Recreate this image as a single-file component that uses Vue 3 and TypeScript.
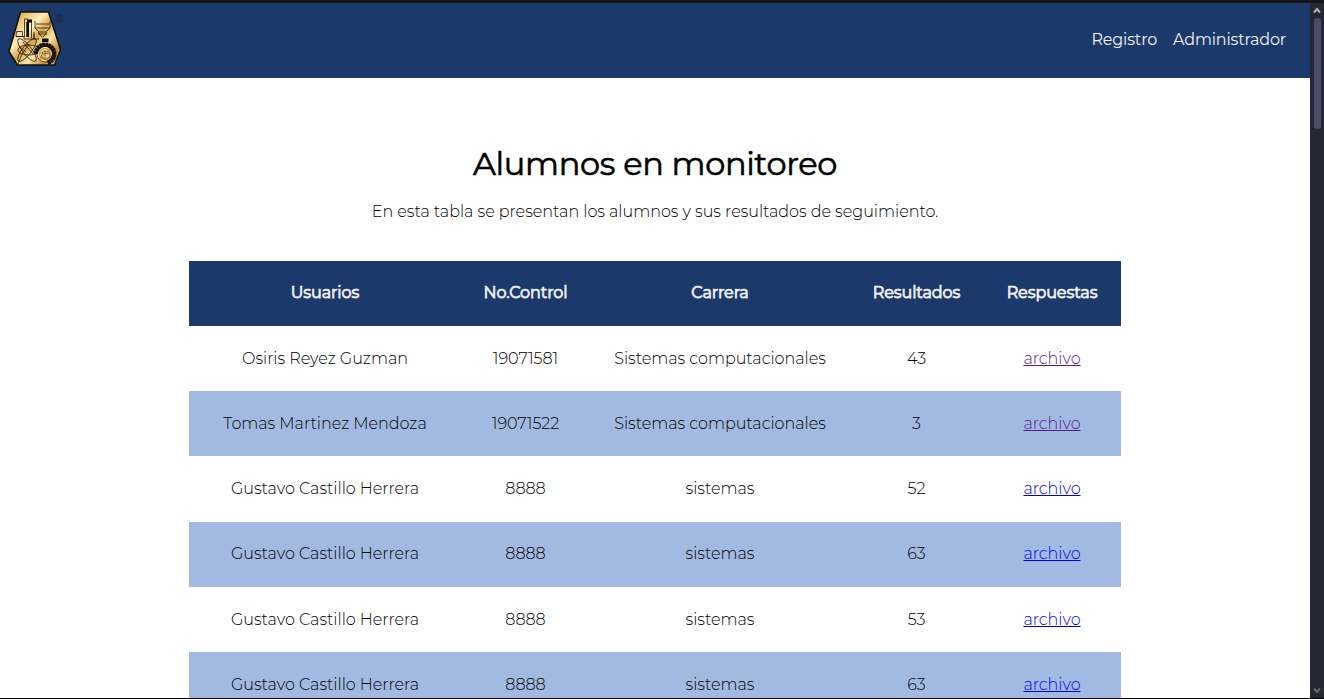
<script setup lang="ts">
interface Alumno {
  usuario: string
  control: string
  carrera: string
  resultado: number
  visitado: boolean
}

const gustavo = (resultado: number): Alumno => ({
  usuario: 'Gustavo Castillo Herrera',
  control: '8888',
  carrera: 'sistemas',
  resultado,
  visitado: false,
})

const alumnos: Alumno[] = [
  { usuario: 'Osiris Reyez Guzman', control: '19071581', carrera: 'Sistemas computacionales', resultado: 43, visitado: true },
  { usuario: 'Tomas Martinez Mendoza', control: '19071522', carrera: 'Sistemas computacionales', resultado: 3, visitado: true },
  gustavo(52),
  gustavo(63),
  gustavo(53),
  gustavo(63),
]

const teeth: number[] = Array.from({ length: 14 }, (_, i) => i * 18 - 80)
</script>

<template>
  <div class="window">
    <div class="viewport">
      <main class="page">
        <nav class="navbar">
          <svg class="logo" viewBox="0 0 60 60" width="60" height="60" aria-hidden="true">
            <defs>
              <linearGradient id="gold" x1="0" y1="0" x2="1" y2="1">
                <stop offset="0" stop-color="#c08a35" />
                <stop offset=".2" stop-color="#ecc777" />
                <stop offset=".36" stop-color="#fff0bf" />
                <stop offset=".5" stop-color="#d8a64d" />
                <stop offset=".65" stop-color="#fbe6a8" />
                <stop offset=".82" stop-color="#c58d36" />
                <stop offset="1" stop-color="#f3d583" />
              </linearGradient>
            </defs>
            <path d="M15.500 4H43.500L55.500 41.500L49.500 57H12.500L4 43.500Z" fill="url(#gold)" stroke="#10100c" stroke-width="1.500" stroke-linejoin="round" />
            <g fill="none" stroke="#17120a" stroke-width=".75">
              <path d="M19.500 29V11H23M21.500 29V14M26.500 30V14M11.500 23.500H17.500V28.500H11ZM11 28.500H19V31H29V26" />
              <path d="M30 13V20H45V13M30 20L34 24H41L45 20M31 16H44M33 24L37 29M42 24L38 29M33 26H42M29 24V31H34" />
              <ellipse cx="22" cy="42" rx="4.500" ry="14" transform="rotate(38 22 42)" />
              <ellipse cx="22" cy="42" rx="4.500" ry="14" transform="rotate(-38 22 42)" />
              <ellipse cx="24" cy="42" rx="11" ry="5" />
              <path d="M13 56L17 46L24 36M14 38L21 44M18 34L28 46" />
            </g>
            <path d="M22 11.500H27V14.500H22ZM37 30.500H43.500V34H37ZM22 14H24V29H22Z" fill="#0c0c0a" />
            <circle cx="40" cy="46" r="8" fill="url(#gold)" stroke="#4c3815" stroke-width=".8" />
            <path v-for="angle in teeth" :key="angle" d="M40 34.500V39" :transform="`rotate(${angle} 40 46)`" stroke="#17120a" stroke-width="3" />
            <circle cx="40" cy="46" r="5.500" fill="none" stroke="#735725" stroke-width=".6" />
            <path d="M36 49L38 43L44 44L45 49L39 51ZM35 45L45 46M40 42V52" fill="none" stroke="#735725" stroke-width=".7" />
            <circle cx="54.300" cy="10.300" r="3.500" fill="none" stroke="#152747" stroke-width=".9" />
            <path d="M53.300 12.500V8.300H55.300V10.300H53.300M54.500 10.300L56 12.500" fill="none" stroke="#152747" stroke-width=".7" />
          </svg>
          <div class="links">
            <a>Registro</a>
            <a>Administrador</a>
          </div>
        </nav>
        <h1>Alumnos en monitoreo</h1>
        <p class="intro">En esta tabla se presentan los alumnos y sus resultados de seguimiento.</p>
        <table>
          <colgroup>
            <col class="c1" /><col class="c2" /><col class="c3" /><col class="c4" /><col class="c5" />
          </colgroup>
          <thead>
            <tr>
              <th>Usuarios</th>
              <th>No.Control</th>
              <th>Carrera</th>
              <th>Resultados</th>
              <th>Respuestas</th>
            </tr>
          </thead>
          <tbody>
            <tr v-for="(alumno, index) in alumnos" :key="index">
              <td>{{ alumno.usuario }}</td>
              <td>{{ alumno.control }}</td>
              <td>{{ alumno.carrera }}</td>
              <td>{{ alumno.resultado }}</td>
              <td><a class="archivo" :class="{ visitado: alumno.visitado }">archivo</a></td>
            </tr>
          </tbody>
        </table>
      </main>
      <aside class="scrollbar">
        <svg width="8" height="7" viewBox="0 0 8 7"><path d="M1 5.500L4 2L7 5.500" fill="none" stroke="#b5b5b5" stroke-width="2" /></svg>
        <div class="thumb"></div>
        <svg class="down" width="8" height="7" viewBox="0 0 8 7"><path d="M1 1.500L4 5L7 1.500" fill="none" stroke="#666" stroke-width="2" /></svg>
      </aside>
    </div>
  </div>
</template>

<style>
body { margin: 0; overflow: hidden; }
</style>

<style scoped>
.window {
  box-sizing: border-box;
  width: 1324px;
  height: 699px;
  border-top: 3px solid #151515;
  border-bottom: 1px solid #000;
  overflow: hidden;
  font-family: Montserrat, Inter, "Open Sans", sans-serif;
  font-size: 16px;
  font-weight: 300;
  letter-spacing: -.02px;
  color: #000;
}
.viewport { display: flex; height: 100%; }
.page { flex: 1; overflow: hidden; background: #fff; }
.navbar {
  box-sizing: border-box;
  display: flex;
  justify-content: space-between;
  height: 75px;
  padding: 5px 24px 0 5px;
  background: #1c396b;
}
.links {
  display: flex;
  gap: 16px;
  padding-top: 22px;
  line-height: 20px;
  font-weight: 400;
  letter-spacing: -.19px;
  color: #f0f0f0;
}
h1 {
  margin: 66px 0 0;
  font-size: 32px;
  font-weight: 400;
  letter-spacing: -.31px;
  -webkit-text-stroke: .6px #000;
  line-height: 40px;
  text-align: center;
}
.intro { margin: 18px 0 0; line-height: 20px; text-align: center; }
table {
  width: 932px;
  margin: 39px auto 0;
  table-layout: fixed;
  border-collapse: collapse;
  text-align: center;
}
.c1 { width: 272px; }
.c2 { width: 129px; }
.c3 { width: 260px; }
.c4 { width: 133px; }
.c5 { width: 138px; }
th, td { box-sizing: border-box; height: 65.15px; padding: 0; white-space: nowrap; line-height: 20px; }
td { padding-top: .5px; }
th {
  padding-bottom: 1px;
  background: #1c396b;
  color: #f0f0f0;
  font-weight: 400;
  letter-spacing: -.08px;
  -webkit-text-stroke: .75px #f0f0f0;
}
tbody tr:nth-child(even) { background: #a2bae2; }
.archivo { color: #00e; text-decoration: underline; }
.archivo.visitado { color: #551a8b; }
.scrollbar {
  box-sizing: border-box;
  display: flex;
  flex-direction: column;
  align-items: center;
  width: 14px;
  padding: 4px 0;
  background: #252834;
}
.thumb { width: 7px; height: 111px; margin-top: 4px; border-radius: 3px; background: #4b4e66; }
.down { margin-top: auto; }
</style>
